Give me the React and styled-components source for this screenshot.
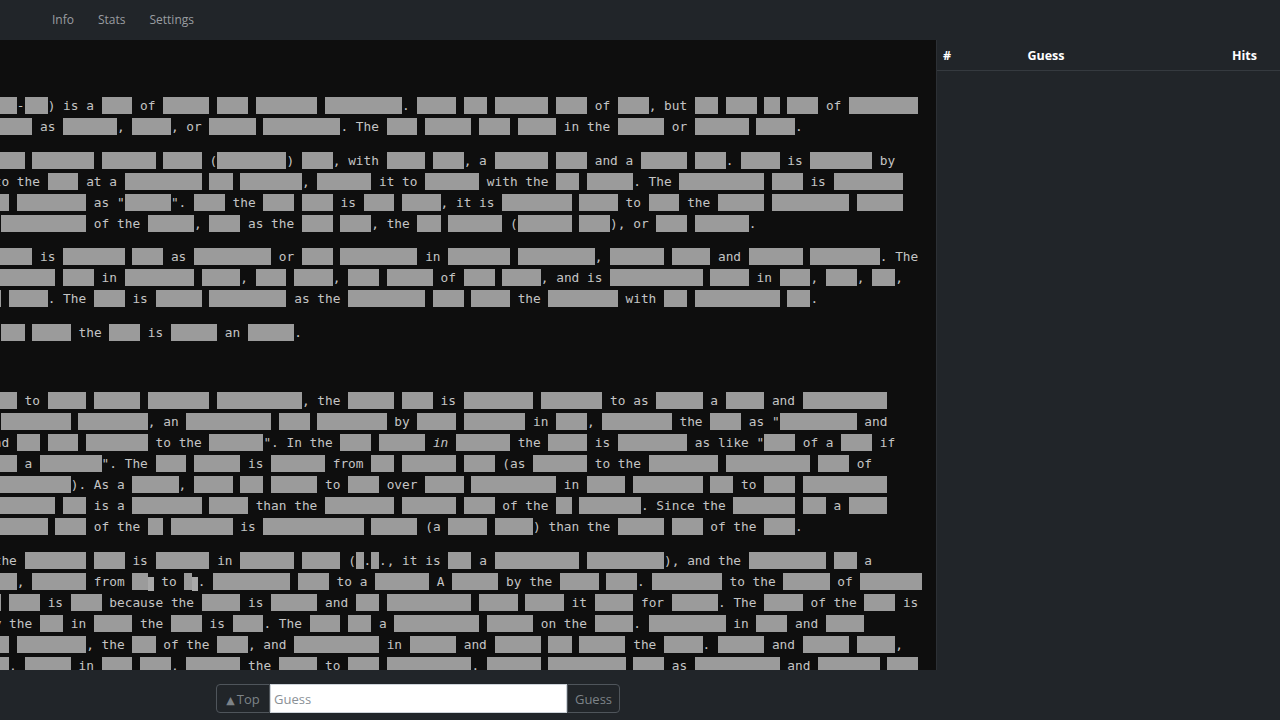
import React from "react";
import styled, { createGlobalStyle } from "styled-components";

const GlobalStyle = createGlobalStyle`
  html, body {
    margin: 0;
    padding: 0;
    background: #212529;
  }
  body {
    font-family: "Open Sans", "Noto Sans", sans-serif;
    overflow: hidden;
  }
`;

const Page = styled.div`
  display: flex;
  flex-direction: column;
  width: 1280px;
  height: 720px;
  background: #212529;
  overflow: hidden;
`;

const NavBar = styled.nav`
  display: flex;
  align-items: center;
  gap: 24px;
  height: 40px;
  flex-shrink: 0;
  box-sizing: border-box;
  padding: 0 0 2px 52px;
`;

const NavLink = styled.a`
  color: #9a9da1;
  font-size: 12px;
  text-decoration: none;
  cursor: pointer;
`;

const Main = styled.div`
  display: flex;
  flex: 1;
  min-height: 0;
`;

const ArticlePane = styled.main`
  width: 936px;
  flex-shrink: 0;
  box-sizing: border-box;
  padding-top: 55px;
  background: #0e0e0e;
  overflow: hidden;
`;

const ArticleBody = styled.div`
  margin-left: calc(1.4px - 3ch);
  font-family: "DejaVu Sans Mono", monospace;
  font-size: 12.8px;
  line-height: 21px;
  color: #c4c4c4;
`;

const Paragraph = styled.p`
  margin: 0 0 12.5px;
`;

const Heading = styled.h2`
  height: 22px;
  margin: 0 0 13px;
`;

const Line = styled.div`
  white-space: pre;
`;

const Block = styled.span`
  display: inline-block;
  width: ${(p) => p.$w}ch;
  height: ${(p) => (p.$sub ? 14 : 17)}px;
  margin-top: ${(p) => (p.$sub ? 6 : 2)}px;
  vertical-align: top;
  background: ${(p) => (p.$sub ? "#a9a9a9" : "#9b9b9b")};
`;

const Em = styled.em`
  font-style: italic;
`;

const Sidebar = styled.aside`
  flex: 1;
  border-left: 1px solid #2c3035;
`;

const TableHead = styled.div`
  display: grid;
  grid-template-columns: 40px 126px 1fr;
  align-items: center;
  height: 31px;
  box-sizing: border-box;
  padding: 1px 23px 0 6px;
  border-bottom: 1px solid #353a3f;
  color: #ffffff;
  font-size: 12.5px;
  font-weight: 700;
`;

const HeadCell = styled.div`
  text-align: ${(p) => p.$align || "left"};
`;

const Footer = styled.footer`
  display: flex;
  align-items: flex-end;
  height: 50px;
  flex-shrink: 0;
  box-sizing: border-box;
  padding: 0 0 7px 216px;
`;

const InputGroup = styled.div`
  display: flex;
  height: 29px;
`;

const GroupButton = styled.button`
  box-sizing: border-box;
  width: ${(p) => p.$w}px;
  height: 29px;
  padding: 0;
  border: 1px solid #4f555b;
  border-radius: ${(p) => (p.$left ? "4px 0 0 4px" : "0 4px 4px 0")};
  background: transparent;
  color: #7d8388;
  font-family: "Open Sans", "Noto Sans", sans-serif;
  font-size: 13px;
`;

const Arrow = styled.span`
  font-family: "DejaVu Sans", sans-serif;
  font-size: 11px;
  margin-right: 2px;
`;

const GuessInput = styled.input`
  box-sizing: border-box;
  width: 297px;
  height: 29px;
  margin: 0;
  padding: 0 3px;
  border: 1px solid #ced4da;
  background: #ffffff;
  font-family: "Open Sans", "Noto Sans", sans-serif;
  font-size: 13px;
  outline: none;
  &::placeholder {
    color: #8a9096;
  }
`;

const article = [
  [
    "#5-#3) is a #4 of #6 #4 #8 #10. #5 #3 #7 #4 of #4, but #3 #4 #2 #4 of #9",
    "#7 as #7, #5, or #6 #10. The #4 #6 #4 #5 in the #6 or #7 #5.",
  ],
  [
    "#6 #8 #7 #5 (#9) #4, with #5 #4, a #7 #4 and a #6 #4. #5 is #8 by",
    "e to the #4 at a #10 #3 #8, #7 it to #7 with the #3 #6. The #11 #4 is #9",
    '#4 #9 as "#6". #4 the #4 #4 is #4 #5, it is #9 #5 to #4 the #6 #10 #6',
    "to #11 of the #6, #4 as the #4 #4, the #3 #7 (#7 #4), or #4 #7.",
  ],
  [
    "#7 is #8 #4 as #10 or #4 #10 in #8 #10, #7 #5 and #7 #9. The",
    "#10 #4 in #9 #5, #4 #5, #4 #6 of #4 #5, and is #12 #5 in #4, #4, #3,",
    "#3 #5. The #4 is #6 #10 as the #10 #4 #5 the #9 with #3 #11 #3.",
  ],
  ["#2 #3 #5 the #4 is #6 an #6."],
  "heading",
  [
    "#5 to #5 #6 #8 #11, the #6 #4 is #9 #8 to as #6 a #5 and #11",
    'to #9 #9, an #11 #4 #9 by #5 #8 in #4, #9 the #4 as "#10 and',
    ' and #3 #4 #8 to the #7". In the #4 #6 _in_ #7 the #5 is #9 as like "#4 of a #4 if',
    '#5 a #8". The #4 #6 is #7 from #3 #7 #4 (as #7 to the #9 #11 #4 of',
    "#12). As a #6, #5 #3 #6 to #4 over #5 #11 in #5 #9 #3 to #4 #11",
    "#10 #3 is a #9 #5 than the #9 #7 #4 of the #2 #8. Since the #8 #3 a #5",
    "#9 #4 of the #2 #8 is #13 #6 (a #5 #5) than the #6 #4 of the #4.",
  ],
  [
    "n the #8 #4 is #7 in #7 #5 (#1.#1., it is #3 a #11 #10), and the #10 #3 a",
    "#5, #7 from #2% to #1%. #10 #4 to a #7 A #6 by the #5 #4. #9 to the #6 of #8",
    "#3 #4 is #4 because the #5 is #6 and #3 #11 #5 #5 it #5 for #6. The #5 of the #4 is",
    " by the #3 in #5 the #4 is #4. The #4 #3 a #11 #6 on the #5. #10 in #4 and #5",
    "#4 #9, the #3 of the #4, and #11 in #6 and #6 #3 #6 the #5. #6 and #6 #5,",
    "#4, #6 in #4 #4, #7 the #5 to #4 #11. #7 #10 #4 as #11 and #8 #4",
  ],
];

// "#n" is a redacted word of n letters, "%" a redacted subscript, _x_ italic
const renderLine = (src) =>
  src
    .split(/(#\d+|%|_[^_]+_)/)
    .filter(Boolean)
    .map((part, i) => {
      if (part === "%") return <Block key={i} $w={0.75} $sub />;
      if (part[0] === "#") return <Block key={i} $w={Number(part.slice(1))} />;
      if (part[0] === "_") return <Em key={i}>{part.slice(1, -1)}</Em>;
      return part;
    });

function App() {
  return (
    <Page>
      <GlobalStyle />
      <NavBar>
        <NavLink>Info</NavLink>
        <NavLink>Stats</NavLink>
        <NavLink>Settings</NavLink>
      </NavBar>
      <Main>
        <ArticlePane>
          <ArticleBody>
            {article.map((para, i) =>
              para === "heading" ? (
                <Heading key={i} />
              ) : (
                <Paragraph key={i}>
                  {para.map((line, j) => (
                    <Line key={j}>{renderLine(line)}</Line>
                  ))}
                </Paragraph>
              )
            )}
          </ArticleBody>
        </ArticlePane>
        <Sidebar>
          <TableHead>
            <HeadCell>#</HeadCell>
            <HeadCell $align="center">Guess</HeadCell>
            <HeadCell $align="right">Hits</HeadCell>
          </TableHead>
        </Sidebar>
      </Main>
      <Footer>
        <InputGroup>
          <GroupButton $left $w={54}>
            <Arrow>▲</Arrow>Top
          </GroupButton>
          <GuessInput placeholder="Guess" />
          <GroupButton $w={53}>Guess</GroupButton>
        </InputGroup>
      </Footer>
    </Page>
  );
}

export default App;
